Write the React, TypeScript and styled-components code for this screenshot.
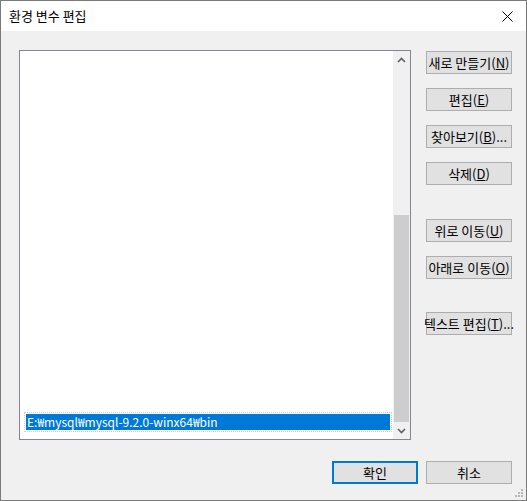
import React from "react";
import styled, { createGlobalStyle } from "styled-components";

const Global = createGlobalStyle`
  html, body { margin: 0; padding: 0; background: #ffffff; }
  * { box-sizing: border-box; }
  body { font-family: "Noto Sans CJK KR", "Noto Sans", sans-serif; font-size: 12px; color: #000; }
`;

const Window = styled.div`
  width: 527px;
  height: 501px;
  border: 1px solid #7a7a7a;
  background: #f0f0f0;
  display: flex;
  flex-direction: column;
  position: relative;
`;

const TitleBar = styled.div`
  height: 30px;
  background: #ffffff;
  display: flex;
  align-items: center;
  justify-content: space-between;
  padding: 0 13px 0 8px;
`;

const Title = styled.span`
  font-size: 13px;
  line-height: 16px;
  color: #000;
`;

const Body = styled.div`
  flex: 1;
  display: flex;
  flex-direction: column;
  padding: 19px 14px 0 18px;
`;

const Main = styled.div`
  display: flex;
  gap: 15px;
`;

const ListBox = styled.div`
  width: 392px;
  height: 390px;
  border: 1px solid #828790;
  background: #ffffff;
  display: flex;
`;

const ListContent = styled.div`
  flex: 1;
  display: flex;
  flex-direction: column;
  justify-content: flex-end;
  padding: 0 1px 7px 4px;
`;

const Item = styled.div`
  height: 20px;
  border: 1px dotted #b9d3ea;
  padding: 1px;
  display: flex;
`;

const ItemInner = styled.div<{ $selected?: boolean }>`
  flex: 1;
  background: ${(p) => (p.$selected ? "#0078d7" : "transparent")};
  color: ${(p) => (p.$selected ? "#ffffff" : "#000")};
  padding-left: 1px;
  font-size: 12px;
  line-height: 16px;
  white-space: nowrap;
`;

const ScrollBar = styled.div`
  width: 17px;
  background: #f0f0f0;
  display: flex;
  flex-direction: column;
`;

const ArrowBtn = styled.div`
  height: 17px;
  display: flex;
  align-items: center;
  justify-content: center;
`;

const Track = styled.div`
  flex: 1;
  display: flex;
  flex-direction: column;
  justify-content: flex-end;
  padding: 0 1px;
`;

const Thumb = styled.div<{ $h: number }>`
  height: ${(p) => p.$h}px;
  background: #cdcdcd;
`;

const ButtonColumn = styled.div`
  width: 86px;
  display: flex;
  flex-direction: column;
  padding-top: 1px;
`;

const Button = styled.button<{ $gap?: number; $default?: boolean }>`
  width: 86px;
  height: 23px;
  margin-top: ${(p) => p.$gap ?? 0}px;
  background: #e1e1e1;
  border: ${(p) => (p.$default ? "2px solid #0078d7" : "1px solid #adadad")};
  font-family: "Noto Sans CJK KR", "Noto Sans", sans-serif;
  font-size: 13px;
  line-height: 16px;
  color: #000;
  padding: 0;
  display: flex;
  align-items: center;
  justify-content: center;
  white-space: nowrap;
`;

const U = styled.span`
  text-decoration: underline;
  text-underline-offset: 1px;
`;

const Footer = styled.div`
  display: flex;
  justify-content: flex-end;
  gap: 8px;
  margin-top: 21px;
`;

const Grip = styled.svg`
  position: absolute;
  right: 3px;
  bottom: 3px;
`;

const ArrowUp = () => (
  <svg width="9" height="6" viewBox="0 0 9 6">
    <path d="M1 5 L4.5 1.5 L8 5" stroke="#606060" strokeWidth="1.6" fill="none" />
  </svg>
);
const ArrowDown = () => (
  <svg width="9" height="6" viewBox="0 0 9 6">
    <path d="M1 1 L4.5 4.5 L8 1" stroke="#606060" strokeWidth="1.6" fill="none" />
  </svg>
);

const Label = ({ text, key_, suffix }: { text: string; key_: string; suffix?: string }) => (
  <span>
    {text}(<U>{key_}</U>){suffix}
  </span>
);

export default function App() {
  return (
    <>
      <Global />
      <Window>
        <TitleBar>
          <Title>환경 변수 편집</Title>
          <svg width="11" height="11" viewBox="0 0 11 11">
            <path d="M0.5 0.5 L10.5 10.5 M10.5 0.5 L0.5 10.5" stroke="#000" strokeWidth="1" />
          </svg>
        </TitleBar>
        <Body>
          <Main>
            <ListBox>
              <ListContent>
                <Item>
                  <ItemInner $selected>E:₩mysql₩mysql-9.2.0-winx64₩bin</ItemInner>
                </Item>
              </ListContent>
              <ScrollBar>
                <ArrowBtn>
                  <ArrowUp />
                </ArrowBtn>
                <Track>
                  <Thumb $h={207} />
                </Track>
                <ArrowBtn>
                  <ArrowDown />
                </ArrowBtn>
              </ScrollBar>
            </ListBox>
            <ButtonColumn>
              <Button><Label text="새로 만들기" key_="N" /></Button>
              <Button $gap={14}><Label text="편집" key_="E" /></Button>
              <Button $gap={14}><Label text="찾아보기" key_="B" suffix="..." /></Button>
              <Button $gap={14}><Label text="삭제" key_="D" /></Button>
              <Button $gap={34}><Label text="위로 이동" key_="U" /></Button>
              <Button $gap={14}><Label text="아래로 이동" key_="O" /></Button>
              <Button $gap={33}><Label text="텍스트 편집" key_="T" suffix="..." /></Button>
            </ButtonColumn>
          </Main>
          <Footer>
            <Button $default>확인</Button>
            <Button>취소</Button>
          </Footer>
        </Body>
        <Grip width="9" height="9" viewBox="0 0 9 9">
          <rect x="7" y="1" width="2" height="2" fill="#b8b8b8" />
          <rect x="4" y="4" width="2" height="2" fill="#b8b8b8" />
          <rect x="7" y="4" width="2" height="2" fill="#b8b8b8" />
          <rect x="1" y="7" width="2" height="2" fill="#b8b8b8" />
          <rect x="4" y="7" width="2" height="2" fill="#b8b8b8" />
          <rect x="7" y="7" width="2" height="2" fill="#b8b8b8" />
        </Grip>
      </Window>
    </>
  );
}
